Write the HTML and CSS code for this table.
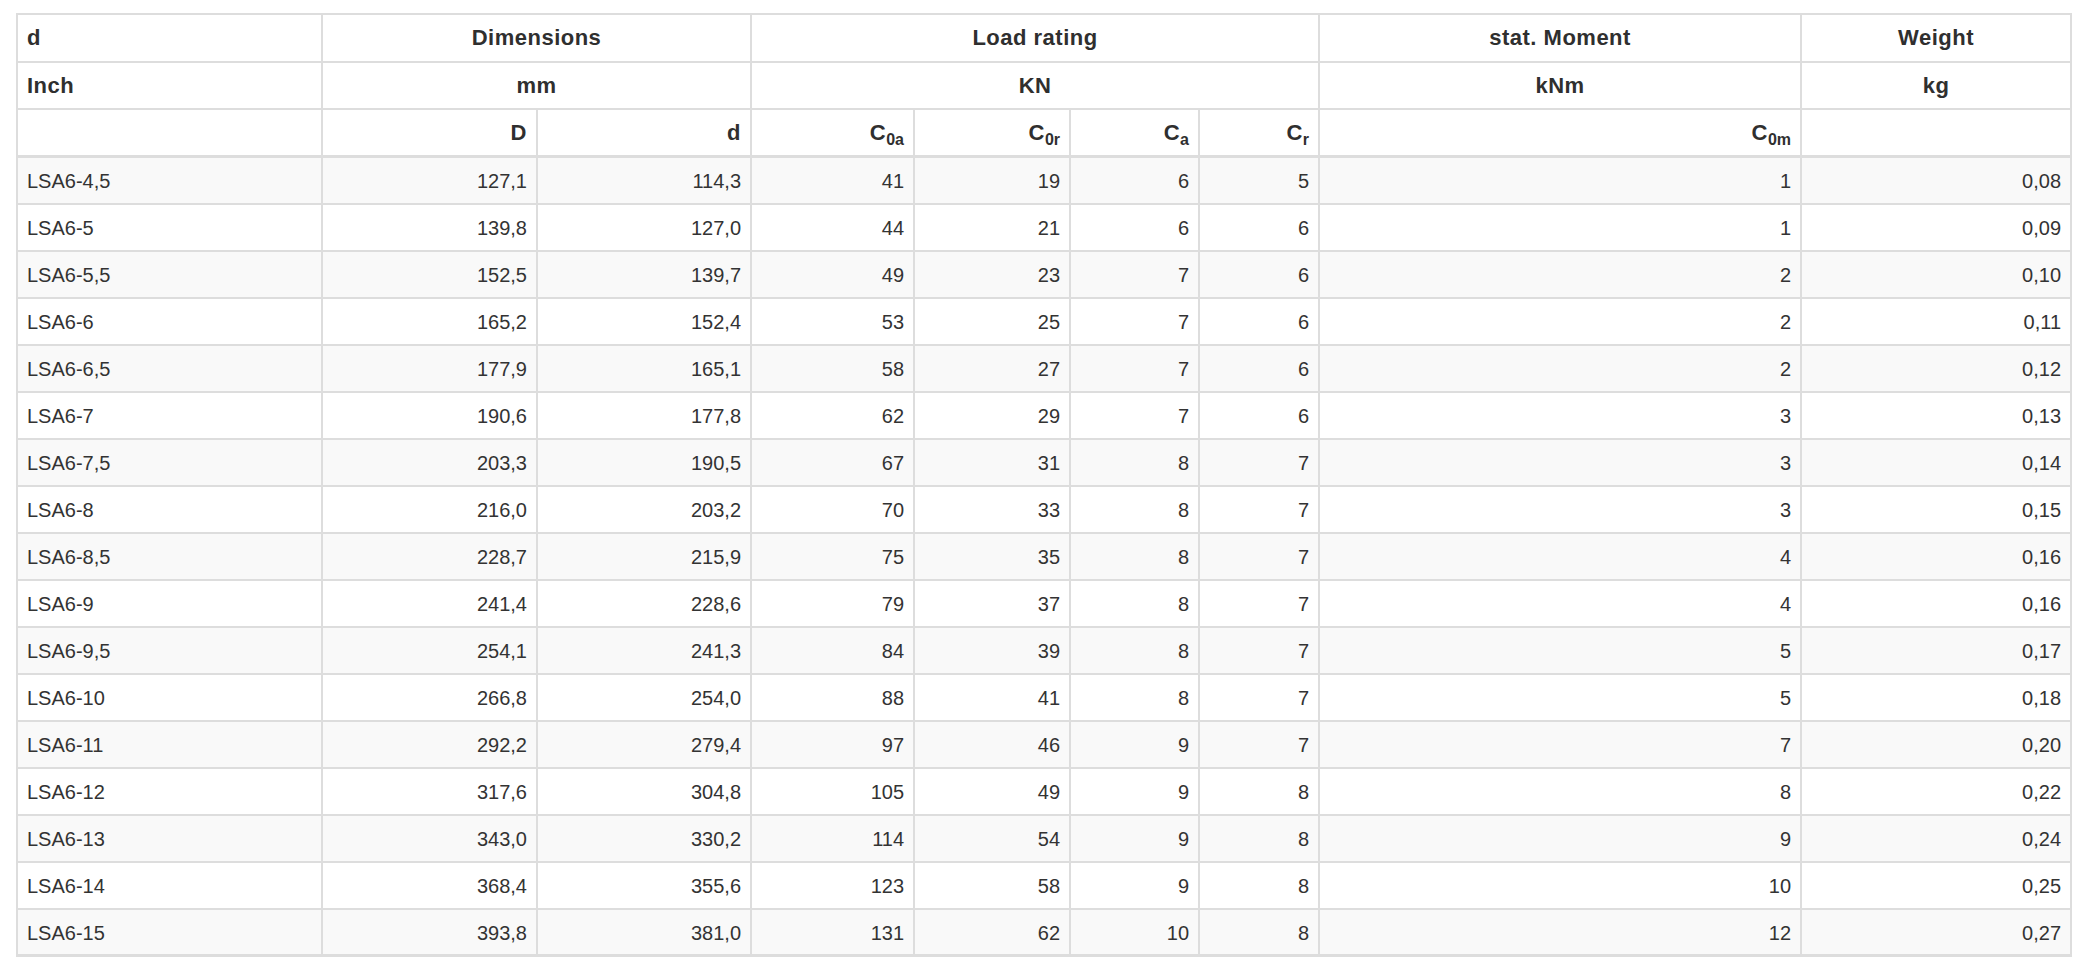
FILE: index.html
```html
<!DOCTYPE html>
<html>
<head>
<meta charset="utf-8">
<link rel="stylesheet" href="styles.css">
</head>
<body>
<div class="wrap">
<table class="spec">
<colgroup>
<col class="c1"><col class="c2"><col class="c3"><col class="c4"><col class="c5"><col class="c6"><col class="c7"><col class="c8"><col class="c9">
</colgroup>
<thead>
<tr class="h1">
<th class="l">d</th>
<th colspan="2">Dimensions</th>
<th colspan="4">Load rating</th>
<th>stat. Moment</th>
<th>Weight</th>
</tr>
<tr class="h2">
<th class="l">Inch</th>
<th colspan="2">mm</th>
<th colspan="4">KN</th>
<th>kNm</th>
<th>kg</th>
</tr>
<tr class="h3">
<th></th>
<th class="r">D</th>
<th class="r">d</th>
<th class="r">C<sub>0a</sub></th>
<th class="r">C<sub>0r</sub></th>
<th class="r">C<sub>a</sub></th>
<th class="r">C<sub>r</sub></th>
<th class="r">C<sub>0m</sub></th>
<th></th>
</tr>
</thead>
<tbody>
<tr><td>LSA6-4,5</td><td>127,1</td><td>114,3</td><td>41</td><td>19</td><td>6</td><td>5</td><td>1</td><td>0,08</td></tr>
<tr><td>LSA6-5</td><td>139,8</td><td>127,0</td><td>44</td><td>21</td><td>6</td><td>6</td><td>1</td><td>0,09</td></tr>
<tr><td>LSA6-5,5</td><td>152,5</td><td>139,7</td><td>49</td><td>23</td><td>7</td><td>6</td><td>2</td><td>0,10</td></tr>
<tr><td>LSA6-6</td><td>165,2</td><td>152,4</td><td>53</td><td>25</td><td>7</td><td>6</td><td>2</td><td>0,11</td></tr>
<tr><td>LSA6-6,5</td><td>177,9</td><td>165,1</td><td>58</td><td>27</td><td>7</td><td>6</td><td>2</td><td>0,12</td></tr>
<tr><td>LSA6-7</td><td>190,6</td><td>177,8</td><td>62</td><td>29</td><td>7</td><td>6</td><td>3</td><td>0,13</td></tr>
<tr><td>LSA6-7,5</td><td>203,3</td><td>190,5</td><td>67</td><td>31</td><td>8</td><td>7</td><td>3</td><td>0,14</td></tr>
<tr><td>LSA6-8</td><td>216,0</td><td>203,2</td><td>70</td><td>33</td><td>8</td><td>7</td><td>3</td><td>0,15</td></tr>
<tr><td>LSA6-8,5</td><td>228,7</td><td>215,9</td><td>75</td><td>35</td><td>8</td><td>7</td><td>4</td><td>0,16</td></tr>
<tr><td>LSA6-9</td><td>241,4</td><td>228,6</td><td>79</td><td>37</td><td>8</td><td>7</td><td>4</td><td>0,16</td></tr>
<tr><td>LSA6-9,5</td><td>254,1</td><td>241,3</td><td>84</td><td>39</td><td>8</td><td>7</td><td>5</td><td>0,17</td></tr>
<tr><td>LSA6-10</td><td>266,8</td><td>254,0</td><td>88</td><td>41</td><td>8</td><td>7</td><td>5</td><td>0,18</td></tr>
<tr><td>LSA6-11</td><td>292,2</td><td>279,4</td><td>97</td><td>46</td><td>9</td><td>7</td><td>7</td><td>0,20</td></tr>
<tr><td>LSA6-12</td><td>317,6</td><td>304,8</td><td>105</td><td>49</td><td>9</td><td>8</td><td>8</td><td>0,22</td></tr>
<tr><td>LSA6-13</td><td>343,0</td><td>330,2</td><td>114</td><td>54</td><td>9</td><td>8</td><td>9</td><td>0,24</td></tr>
<tr><td>LSA6-14</td><td>368,4</td><td>355,6</td><td>123</td><td>58</td><td>9</td><td>8</td><td>10</td><td>0,25</td></tr>
<tr><td>LSA6-15</td><td>393,8</td><td>381,0</td><td>131</td><td>62</td><td>10</td><td>8</td><td>12</td><td>0,27</td></tr>
</tbody>
</table>
</div>
</body>
</html>
```

FILE: styles.css
```css
html, body {
  margin: 0;
  padding: 0;
  background: #fff;
}
body {
  font-family: "Liberation Sans", Arial, Helvetica, sans-serif;
  color: #333;
}
.wrap {
  padding: 13px 0 0 16px;
}
.spec {
  table-layout: fixed;
  border-collapse: separate;
  border-spacing: 0;
  width: 2056px;
  border-top: 2px solid #ddd;
  border-left: 2px solid #ddd;
}
.c1 { width: 305px; }
.c2 { width: 215px; }
.c3 { width: 214px; }
.c4 { width: 163px; }
.c5 { width: 156px; }
.c6 { width: 129px; }
.c7 { width: 120px; }
.c8 { width: 482px; }
.c9 { width: 270px; }
.spec th, .spec td {
  box-sizing: border-box;
  border-right: 2px solid #ddd;
  border-bottom: 2px solid #ddd;
  padding: 0 9px;
  overflow: hidden;
  white-space: nowrap;
}
.spec th {
  font-weight: bold;
  font-size: 22px;
  letter-spacing: 0.5px;
  text-align: center;
  height: 47px;
  background: #fff;
  color: #2f2f2f;
}
.spec .h1 th { height: 48px; }
.spec .h3 th {
  height: 48px;
  border-bottom-width: 3px;
}
.spec th.l { text-align: left; }
.spec th.r { text-align: right; }
.spec th sub {
  font-size: 16px;
  vertical-align: -5px;
  line-height: 0;
  letter-spacing: 0;
}
.spec td {
  font-size: 20px;
  letter-spacing: 0;
  height: 47px;
  padding-top: 2px;
  text-align: right;
}
.spec td:first-child { text-align: left; }
.spec tbody tr:nth-child(odd) td { background: #f9f9f9; }
.spec tbody tr:last-child td { border-bottom-width: 3px; }
```
